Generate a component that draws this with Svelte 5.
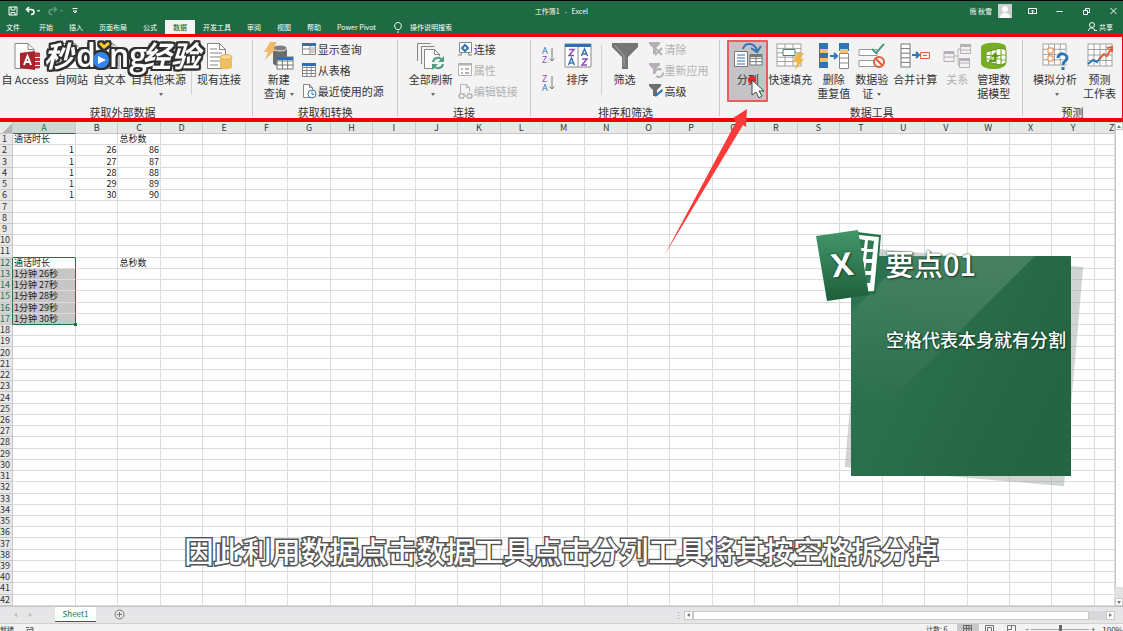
<script>
    const tabs = ['文件', '开始', '插入', '页面布局', '公式', '数据', '开发工具', '审阅', '视图', '帮助', 'Power Pivot'];
    let activeTab = $state('数据');

    const columns = 'ABCDEFGHIJKLMNOPQRSTUVWXYZ'.split('');
    const rows = Array.from({ length: 42 }, (_, i) => i + 1);

    const cells = {
        A1: '通话时长', C1: '总秒数',
        A12: '通话时长', C12: '总秒数',
    };
    for (let i = 0; i < 5; i++) {
        cells[`A${i + 2}`] = 1;
        cells[`B${i + 2}`] = 26 + i;
        cells[`C${i + 2}`] = 86 + i;
        cells[`A${i + 13}`] = `1分钟 ${26 + i}秒`;
    }

    const inSelection = (col, row) => col === 'A' && row >= 12 && row <= 17;

    // ribbon groups; flex is the share of the ribbon's width
    const groups = [
        { name: '获取外部数据', flex: 253, kind: 'external', items: [
            { icon: 'access', lines: ['自 Access'] },
            { icon: 'doc', lines: ['自网站'] },
            { icon: 'doc', lines: ['自文本'] },
            { icon: 'doc', lines: ['自其他来源'], menu: true },
            { sep: true },
            { icon: 'existing', lines: ['现有连接'] },
        ] },
        { name: '获取和转换', flex: 145, kind: 'query', items: [
            { icon: 'newquery', lines: ['新建', '查询'], menu: true },
            { stack: [
                { icon: 'showquery', label: '显示查询' },
                { icon: 'table', label: '从表格' },
                { icon: 'recent', label: '最近使用的源' },
            ] },
        ] },
        { name: '连接', flex: 133, kind: 'connect', items: [
            { icon: 'refresh', lines: ['全部刷新'], menu: true },
            { stack: [
                { icon: 'connection', label: '连接' },
                { icon: 'props', label: '属性', disabled: true },
                { icon: 'editlink', label: '编辑链接', disabled: true },
            ] },
        ] },
        { name: '排序和筛选', flex: 190, kind: 'sort', items: [
            { sorts: true },
            { icon: 'sort', lines: ['排序'] },
            { sep: true },
            { icon: 'filter', lines: ['筛选'] },
            { stack: [
                { icon: 'clear', label: '清除', disabled: true },
                { icon: 'reapply', label: '重新应用', disabled: true },
                { icon: 'advanced', label: '高级' },
            ] },
        ] },
        { name: '数据工具', flex: 303, kind: 'data', items: [
            { icon: 'split', lines: ['分列'], marked: true },
            { icon: 'flash', lines: ['快速填充'] },
            { icon: 'dedupe', lines: ['删除', '重复值'] },
            { icon: 'validate', lines: ['数据验', '证'], menu: true },
            { icon: 'consolidate', lines: ['合并计算'] },
            { icon: 'relation', lines: ['关系'], disabled: true },
            { icon: 'model', lines: ['管理数', '据模型'] },
        ] },
        { name: '预测', flex: 99, kind: 'forecast', items: [
            { icon: 'whatif', lines: ['模拟分析'], menu: true },
            { icon: 'forecast', lines: ['预测', '工作表'] },
        ] },
    ];
</script>

{#snippet gridLines(x, y, w, h, nx, ny, color)}
    <rect {x} {y} width={w} height={h} fill="#fff" stroke={color} />
    {#each Array(nx - 1) as _, i}
        <path d="M{x + ((i + 1) * w) / nx} {y}v{h}" stroke={color} />
    {/each}
    {#each Array(ny - 1) as _, i}
        <path d="M{x} {y + ((i + 1) * h) / ny}h{w}" stroke={color} />
    {/each}
{/snippet}

{#snippet bigIcon(name)}
    <svg class="big-icon" viewBox="0 0 30 28" fill="none" aria-hidden="true">
        {#if name === 'access'}
            <path d="M5 1.500h13l6 6v19H5z" fill="#fff" stroke="#8a8a8a" />
            <path d="M18 1.500v6h6" stroke="#8a8a8a" />
            <path d="M23 12c0-2 8-2 8 0v13c0 2-8 2-8 0z" fill="#b5373a" />
            <path d="M23 15.500h7M23 19.500h7M23 23.500h7" stroke="#fff" />
            <path d="M10 11l15-2v19l-15-2z" fill="#a4262c" />
            <path d="M14 23l3.500-9 3.500 9M15.500 20h4" stroke="#fff" stroke-width="2" />
        {:else if name === 'doc'}
            <path d="M5 1.500h13l6 6v19H5z" fill="#fff" stroke="#8a8a8a" />
            <path d="M18 1.500v6h6M8 11h12M8 15h12M8 19h12" stroke="#8a8a8a" />
        {:else if name === 'existing'}
            <path d="M3.500 1.500h12l6 6v19h-18z" fill="#fff" stroke="#858585" />
            <path d="M15.500 1.500v6h6M6 7h7M6 11h12M6 15h10M6 19h10M6 23h8" stroke="#858585" />
            <path d="M16 15v10c0 3 12 3 12 0V15z" fill="#eebf62" />
            <ellipse cx="22" cy="15" rx="6" ry="2.500" fill="#f7d795" stroke="#e2ac48" />
        {:else if name === 'newquery'}
            <path d="M9 5v16c0 4 14 4 14 0V5z" fill="#6b6b6b" />
            <ellipse cx="16" cy="6" rx="7" ry="3" fill="#7f7f7f" stroke="#eee" />
            <path d="M6 0h7L9 7h3L1 18l3-8H0z" fill="#efb96b" />
            {@render gridLines(13, 15, 16, 12, 3, 3, '#777')}
            <path d="M13 15h16v3H13z" fill="#2b70b5" />
        {:else if name === 'refresh'}
            <path d="M1.500 19V1.500h13M5.500 22V4.500h13" stroke="#858585" />
            <path d="M8.500 7.500h10l5 5v14h-15z" fill="#fff" stroke="#858585" />
            <path d="M18.500 7.500v5h5" stroke="#858585" />
            <circle cx="22" cy="21" r="7" fill="#f3f3f3" />
            <path d="M17 20a5 5 0 0 1 9-2M27 22a5 5 0 0 1-9 2" stroke="#4f9d7f" stroke-width="2" />
            <path d="M28 14v6h-6zM16 28v-6h6z" fill="#4f9d7f" />
        {:else if name === 'sort'}
            <path d="M2 2h26v23H2z" fill="#fff" stroke="#888" />
            <path d="M2 2h26v3H2z" fill="#2b70b5" />
            <path d="M15 5v20" stroke="#888" />
            <path d="M6 7.500h5l-5 6h5M19 17h5l-5 6h5" stroke="#8b52b5" stroke-width="1.500" />
            <path d="M5.500 23l3-7 3 7M6.500 21h4M18.500 14l3-7 3 7M19.500 12h4" stroke="#3a79b8" stroke-width="1.500" />
        {:else if name === 'filter'}
            <path d="M2 1h26v4L18 15v12h-6V15L2 5z" fill="#757575" />
            <path d="M5 3.500l9 10v11" stroke="#a6a6a6" />
        {:else if name === 'split'}
            <path d="M10 7c2-7 12-7 14 2" stroke="#2f75b5" stroke-width="2" />
            <path d="M18 6l6 4 4-6" stroke="#2f75b5" stroke-width="2" />
            <path d="M1.500 9.500h13v15h-13z" fill="#fff" stroke="#777" />
            <path d="M4 13h8M4 16h8M4 19h8M4 22h8" stroke="#2f75b5" />
            {@render gridLines(17, 13, 12, 10, 2, 3, '#777')}
            <path d="M17 12h12v3H17z" fill="#777" />
        {:else if name === 'flash'}
            {@render gridLines(2, 2, 24, 22, 3, 5, '#a0a0a0')}
            <path d="M8 7.500h12v6H8z" fill="#fff" stroke="#398b68" />
            <path d="M22 11h7l-4 6h4l-9 11 2-8h-4z" fill="#efb54d" />
        {:else if name === 'dedupe'}
            <path d="M0 1h9v25H0zM20 1h10v8H20z" fill="#2f75b5" />
            <path d="M1 7h8v4H1zM1 16h8v4H1zM21 7h8v4h-8z" fill="#f3c36c" />
            <path d="M20.500 11.500h9v15h-9zM20 16h10M20 21h10" fill="#fff" stroke="#888" />
            <path d="M11 14h6M15 11l3 3-3 3" stroke="#2f75b5" stroke-width="2" />
        {:else if name === 'validate'}
            <path d="M2 7.500h18v6H2zM2 18.500h18v6H2z" fill="#fff" stroke="#999" />
            <path d="M15 7l4 4 8-9" stroke="#4f9d7f" stroke-width="2" />
            <circle cx="22" cy="20" r="5" stroke="#db6038" stroke-width="2" fill="#f3f3f3" />
            <path d="M18.500 16.500l7 7" stroke="#db6038" stroke-width="2" />
        {:else if name === 'consolidate'}
            {@render gridLines(1, 2, 9, 23, 1, 5, '#777')}
            <path d="M12 13h6M16 10l3 3-3 3" stroke="#2f75b5" stroke-width="2" />
            <path d="M20.500 10.500h9v6h-9zM23 13.500h4" stroke="#db6038" />
        {:else if name === 'relation'}
            <path d="M12 14h4V7h3M16 14v9h3" stroke="#b5b0b5" />
            <path d="M2 9.500h10v10H2zM18.500 2.500h10v9h-10zM17.500 16.500h10v9h-10zM18 8h10M18 21h10M2 15h10" fill="#f3f1f3" stroke="#b5b0b5" />
            <path d="M2 9h10v3H2zM18 2h11v3H18zM17 16h11v3H17z" fill="#b5b0b5" />
        {:else if name === 'model'}
            <path d="M2 5c0-5 24-6 25 0v16c0 8-25 8-25 0z" fill="#78ad26" />
            <path d="M7 10l15-4v17L7 20zM22 6l5 2v13l-5 2" fill="#fff" stroke="#5f9518" />
            <path d="M12 9v12M17 7v15M7 13.500h15M7 17h15M22 13h5M22 18h5" stroke="#78ad26" />
            <path d="M10 19h6v-6M13 15l3-3 3 3" stroke="#5f9518" stroke-width="2" />
        {:else if name === 'whatif'}
            {@render gridLines(3, 2, 23, 21, 4, 4, '#a0a0a0')}
            <path d="M8 6h5v5H8zM8 14h5v5H8z" fill="#fff" stroke="#e2803f" />
            <path d="M18 16c0-6 9-5 9 0 0 3-4 3-4 7" stroke="#f3f3f3" stroke-width="5" />
            <path d="M18 16c0-6 9-5 9 0 0 3-4 3-4 7M23 25v3" stroke="#2f75b5" stroke-width="3" />
        {:else if name === 'forecast'}
            {@render gridLines(3, 2, 24, 22, 4, 4, '#a0a0a0')}
            <path d="M3 22l5-4 4 2 4-5" stroke="#2f75b5" stroke-width="2" />
            <path d="M14 17l5-5 3 2 4-7M22 6l5-1v5" stroke="#db6038" stroke-width="2" />
        {/if}
    </svg>
{/snippet}

{#snippet smallIcon(name)}
    <svg class="small-icon" viewBox="0 0 16 16" fill="none" aria-hidden="true">
        {#if name === 'showquery'}
            <path d="M1.500 2.500h13v11h-13zM1 8h8M9 5v9" fill="#fff" stroke="#888" />
            <path d="M1 2h14v3H1z" fill="#2b70b5" />
            <path d="M10 7h4M10 9h4M10 11h4" stroke="#999" />
        {:else if name === 'table'}
            {@render gridLines(1.5, 2.5, 13, 12, 3, 4, '#888')}
            <path d="M1 1h14v3H1z" fill="#2b70b5" />
        {:else if name === 'recent'}
            <path d="M2.500 1.500h6l3 3v10h-9zM8.500 1.500v3h3" fill="#fff" stroke="#888" />
            <circle cx="11" cy="11" r="4" fill="#fff" stroke="#2f75b5" />
            <path d="M11 8.500v3h2" stroke="#2f75b5" />
        {:else if name === 'connection'}
            <path d="M2.500 1.500h12v10h-12zM1 14h4M11 14h4M5 12l-2 2M11 12l2 2" fill="#fff" stroke="#888" />
            <path d="M8 4l3 3-3 3-3-3z" stroke="#2f75b5" stroke-width="2" />
        {:else if name === 'props'}
            <path d="M1.500 1.500h13v12h-13z" fill="#fff" stroke="#b5b0b5" />
            <path d="M1 2.500h14" stroke="#b5b0b5" stroke-width="2" />
            <path d="M4 7h2M8 7h4M4 11h2M8 11h4" stroke="#b5b0b5" stroke-width="2" />
        {:else if name === 'editlink'}
            <path d="M3.500 12V1.500h6l3 3V9M9.500 1.500v3h3" stroke="#b5b0b5" />
            <path d="M8 11H4a2 2 0 0 0 0 4h3M10 11h3a2 2 0 0 1 0 4h-3M6 13h5" stroke="#b5b0b5" stroke-width="1.500" />
        {:else if name === 'clear'}
            <path d="M1 1h11v2L8 7v6H5V7L1 3z" fill="#b5b0b5" />
            <path d="M7 7l7 7M14 7l-7 7" stroke="#b5b0b5" stroke-width="2" />
        {:else if name === 'reapply'}
            <path d="M1 1h11v2L8 7v5H5V7L1 3z" fill="#b5b0b5" />
            <circle cx="11" cy="11" r="4" stroke="#b5b0b5" fill="#f3f3f3" stroke-width="2" stroke-dasharray="9 3" />
        {:else if name === 'advanced'}
            <path d="M1 1h12v2L9 7v6H5V7L1 3z" fill="#6e6e6e" />
            <path d="M7 14l1-3 6-5 1 2-6 5z" fill="#2f75b5" />
        {/if}
    </svg>
{/snippet}

{#snippet sortIcon(top, bottom)}
    <svg class="sort-icon" viewBox="0 0 14 18" aria-hidden="true">
        <text x="1" y="8" fill={top === 'A' ? '#3a79b8' : '#8b52b5'}>{top}</text>
        <text x="1" y="17" fill={bottom === 'A' ? '#3a79b8' : '#8b52b5'}>{bottom}</text>
        <path d="M11 2v13M8.500 12.500L11 15l2.500-2.500" fill="none" stroke="#777" />
    </svg>
{/snippet}

<main>
    <header>
        <div class="titlebar">
            <div class="quick">
                <button aria-label="保存"><svg width="10" height="10" viewBox="0 0 10 10" fill="none" stroke="#fff"><path d="M1 1h8v8H1zM3 1v3h4V1M3 9V6.500h4V9" /></svg></button>
                <button aria-label="撤消"><svg width="16" height="10" viewBox="0 0 16 10" fill="none" stroke="#fff" stroke-width="1.500"><path d="M4 1L1.500 3.500 4 6M2 3.500h4c4 0 4 5 0 5" /><path d="M12 4.500h3l-1.500 1z" stroke-width=".5" fill="#fff" /></svg></button>
                <button class="faded" aria-label="恢复"><svg width="16" height="10" viewBox="0 0 16 10" fill="none" stroke="#fff" stroke-width="1.500"><path d="M6 1l2.500 2.500L6 6M8 3.500H4c-4 0-4 5 0 5" /><path d="M12 4.500h3l-1.500 1z" stroke-width=".5" fill="#fff" /></svg></button>
                <button aria-label="自定义"><svg width="8" height="8" viewBox="0 0 8 8" fill="none" stroke="#fff"><path d="M1.500 1.500h5M2 4h4L4 6z" /></svg></button>
            </div>
            <h1>工作簿1 &nbsp; - &nbsp; Excel</h1>
            <div class="account">
                <span>熊 秋雪</span>
                <svg class="avatar" viewBox="0 0 14 14"><path d="M0 0h14v14H0z" fill="#cfcfcf" /><circle cx="7" cy="5" r="3" fill="#fff" /><path d="M2 14c0-7 10-7 10 0z" fill="#fff" /></svg>
                <button aria-label="功能区显示选项"><svg width="9" height="8" viewBox="0 0 9 8" fill="none" stroke="#fff"><path d="M.5 1.500h8v5h-8zM4.500 6V3M3 4.500L4.500 3 6 4.500" /></svg></button>
                <button aria-label="最小化"><svg width="9" height="8" viewBox="0 0 9 8" stroke="#fff"><path d="M1.500 4.500h6" /></svg></button>
                <button aria-label="还原"><svg width="9" height="8" viewBox="0 0 9 8" fill="none" stroke="#fff"><path d="M1.500 3.500h4v4h-4zM3.500 3V1.500h4v4H6" /></svg></button>
                <button aria-label="关闭"><svg width="9" height="8" viewBox="0 0 9 8" stroke="#fff"><path d="M1.500 1l6 6M7.500 1l-6 6" /></svg></button>
            </div>
        </div>
        <nav>
            {#each tabs as tab}
                <button class="tab" class:active={tab === activeTab} onclick={() => (activeTab = tab)}>{tab}</button>
            {/each}
            <button class="tell">
                <svg width="8" height="11" viewBox="0 0 8 11" fill="none" stroke="#fff"><path d="M2.500 7.500C-1 4 1 .5 4 .5S9 4 5.500 7.500zM3 10h2" /></svg>
                操作说明搜索
            </button>
            <button class="share">
                <svg width="9" height="10" viewBox="0 0 9 10" fill="none" stroke="#fff"><circle cx="4" cy="3" r="2.500" /><path d="M.5 9c0-4 5-4 6-1M6 8.500h3" /></svg>
                共享
            </button>
        </nav>
    </header>

    <section class="ribbon">
        {#each groups as group}
            <div class="group {group.kind}" style="flex-grow: {group.flex}">
                <div class="tools">
                    {#each group.items as item}
                        {#if item.sep}
                            <span class="sep"></span>
                        {:else if item.sorts}
                            <div class="sorts">
                                <button aria-label="升序">{@render sortIcon('A', 'Z')}</button>
                                <button aria-label="降序">{@render sortIcon('Z', 'A')}</button>
                            </div>
                        {:else if item.stack}
                            <div class="stack">
                                {#each item.stack as small}
                                    <button class="small" disabled={small.disabled}>
                                        {@render smallIcon(small.icon)}
                                        {small.label}
                                    </button>
                                {/each}
                            </div>
                        {:else}
                            <button class="big" class:marked={item.marked} disabled={item.disabled}>
                                {@render bigIcon(item.icon)}
                                <span>{item.lines[0]}</span>
                                {#if item.lines[1] || item.menu}
                                    <span>{item.lines[1] ?? ''}{#if item.menu}<i class="caret"></i>{/if}</span>
                                {/if}
                            </button>
                        {/if}
                    {/each}
                </div>
                <h2>{group.name}</h2>
            </div>
        {/each}

        <svg class="watermark" viewBox="0 0 170 44" aria-label="秒dong经验">
            <g class="brand">
                <text class="hanzi" x="6" y="29">秒</text>
                <text class="latin" x="38" y="29">d</text>
                <circle cx="63" cy="22" r="8" fill="#3385f0" />
                <text class="latin" x="71" y="29">ng</text>
                <text class="hanzi" x="104" y="29">经验</text>
                <path d="M62 5l4 4 5-4" fill="none" stroke="#ffc629" stroke-width="3" />
            </g>
            <path d="M60 18l8 4-8 4z" fill="#fff" />
        </svg>

        <svg class="cursor" viewBox="0 0 16 22" aria-hidden="true">
            <circle cx="4" cy="4" r="4" fill="#e3262b" />
            <path d="M4 4v15l4-3 3 6 3-2-3-5h5z" fill="#fff" stroke="#444" />
        </svg>

        <svg class="pointer" viewBox="0 0 84 148" aria-hidden="true">
            <path d="M83 0L69 9l3 4L0 147l79-131 3 2z" fill="#fd3a3a" />
        </svg>
    </section>

    <section class="sheet">
        <div class="grid">
            <table>
                <colgroup>
                    <col class="col-num" />
                    <col class="col-a" />
                    {#each columns.slice(1, -1) as _}<col />{/each}
                    <col class="col-z" />
                </colgroup>
                <thead>
                    <tr>
                        <th class="corner"></th>
                        {#each columns as col}
                            <th class:picked={col === 'A'} class:cut={col === 'Z'}>{col}</th>
                        {/each}
                    </tr>
                </thead>
                <tbody>
                    {#each rows as row}
                        <tr>
                            <th class:picked={inSelection('A', row)}>{row}</th>
                            {#each columns as col}
                                {@const value = cells[col + row]}
                                <td
                                    class:number={typeof value === 'number'}
                                    class:above={col === 'A' && row === 11}
                                    class:selected={inSelection(col, row)}
                                    class:first={col === 'A' && row === 12}
                                    class:last={col === 'A' && row === 17}>{value ?? ''}</td>
                            {/each}
                        </tr>
                    {/each}
                </tbody>
            </table>
        </div>

        <div class="vscroll">
            <button aria-label="向上滚动"><i class="up"></i></button>
            <div class="track"><div class="thumb"></div></div>
            <button aria-label="向下滚动"><i class="down"></i></button>
        </div>

        <aside class="note">
            <div class="shadow"></div>
            <svg class="paper" viewBox="0 0 220 220" preserveAspectRatio="none" aria-hidden="true">
                <defs>
                    <linearGradient id="base" x1="0" y1="0" x2="1" y2="0.5">
                        <stop offset="0" stop-color="#2f7550" />
                        <stop offset="1" stop-color="#246543" />
                    </linearGradient>
                    <linearGradient id="shine" x1="0.7" y1="0" x2="0.3" y2="0.9">
                        <stop offset="0" stop-color="#fff" stop-opacity="0.14" />
                        <stop offset="1" stop-color="#fff" stop-opacity="0" />
                    </linearGradient>
                </defs>
                <path d="M0 0h220v220H0z" fill="url(#base)" />
                <path d="M56 0h128L0 184V56z" fill="url(#shine)" />
            </svg>
            <svg class="logo" viewBox="0 0 68 74" aria-hidden="true">
                <defs>
                    <linearGradient id="cover" x1="0" y1="0" x2="0" y2="1">
                        <stop offset="0" stop-color="#43966b" />
                        <stop offset="1" stop-color="#1d5f3a" />
                    </linearGradient>
                </defs>
                <path d="M42 4l24 3-5 59-20 3z" fill="#227447" />
                <path d="M44 7l20 2-5 54-14 1z" fill="#fff" />
                <path d="M44 11l6 1-1 8h-5zM53 12l6 1-1 8h-6zM44 23h5l-1 8h-4zM52 24h6l-1 7h-6zM45 35h4l-1 8h-3zM51 35h6l-1 8h-6zM46 47h3l-1 8h-2zM51 47h5l-1 8h-5z" fill="#2f7a52" />
                <path d="M1 8l42-6 11 65-42 6z" fill="url(#cover)" />
                <text x="27" y="48" text-anchor="middle" transform="rotate(-8 27 37)">X</text>
            </svg>
            <h3>要点01</h3>
            <p>空格代表本身就有分割</p>
        </aside>

        <p class="caption">因此利用数据点击数据工具点击分列工具将其按空格拆分掉</p>
    </section>

    <section class="sheetbar">
        <div class="arrows">
            <button aria-label="上一张"><i class="left"></i></button>
            <button aria-label="下一张"><i class="right"></i></button>
        </div>
        <button class="sheet-tab">Sheet1</button>
        <button class="add" aria-label="新工作表"><svg width="11" height="11" viewBox="0 0 11 11" fill="none" stroke="#777"><circle cx="5.500" cy="5.500" r="4.500" /><path d="M3 5.500h5M5.500 3v5" /></svg></button>
        <div class="hscroll">
            <span class="grip">⋮</span>
            <button aria-label="向左滚动"><i class="left"></i></button>
            <div class="track"><div class="thumb"></div></div>
            <button aria-label="向右滚动"><i class="right"></i></button>
        </div>
    </section>

    <footer>
        <span>就绪</span>
        <svg width="9" height="8" viewBox="0 0 9 8" fill="none" stroke="#666"><path d="M1 1.500h3M5 1.500h3v5H2v-3h6" /></svg>
        <span class="count">计数: 6</span>
        <button class="view on" aria-label="普通"><svg width="9" height="8" viewBox="0 0 9 8" fill="none" stroke="#666"><path d="M.5 .5h8v7h-8zM.5 3.500h8M3.500 .5v7M6 .5v7" /></svg></button>
        <button class="view" aria-label="页面布局"><svg width="9" height="8" viewBox="0 0 9 8" fill="none" stroke="#777"><path d="M.5 .5h8v7h-8zM2.500 2.500h4v4h-4z" /></svg></button>
        <button class="view" aria-label="分页预览"><svg width="9" height="8" viewBox="0 0 9 8" fill="none" stroke="#777"><path d="M.5 .5h8v7h-8zM4.500 .5v4h-4" /></svg></button>
        <span class="zoom-sign">−</span>
        <input type="range" min="10" max="190" value="100" aria-label="缩放" />
        <span class="zoom-sign">+</span>
        <span class="percent">100%</span>
    </footer>
</main>

<style>
    :global(body) {
        margin: 0;
        overflow: hidden;
    }
    main {
        --green: #1d6a43;
        height: 100vh;
        display: flex;
        flex-direction: column;
        overflow: hidden;
        background: #fff;
        color: #333;
        font-family: "Noto Sans CJK SC", "Noto Sans", sans-serif;
        font-size: 11px;
    }
    button {
        margin: 0;
        padding: 0;
        border: 0;
        background: none;
        color: inherit;
        font: inherit;
    }
    h1, h2, h3, p {
        margin: 0;
        font-weight: 400;
    }
    svg {
        display: block;
        flex: none;
    }

    /* title bar and tabs */
    header {
        flex: none;
        border-top: 1px solid #000;
        background: var(--green);
        color: #fff;
        font-size: 7px;
    }
    .titlebar {
        height: 19px;
        display: grid;
        grid-template-columns: 1fr auto 1fr;
        align-items: center;
    }
    .quick, .account {
        display: flex;
        align-items: center;
    }
    .quick {
        padding-left: 8px;
        gap: 7px;
    }
    .faded {
        opacity: .3;
    }
    h1 {
        font-size: 7px;
    }
    .account {
        justify-content: flex-end;
        gap: 18px;
        padding-right: 5px;
    }
    .account .avatar {
        width: 14px;
        height: 14px;
        margin-left: -12px;
        margin-right: -2px;
    }
    nav {
        height: 14px;
        display: flex;
        align-items: stretch;
        line-height: 14px;
    }
    .tab {
        padding: 0 8px;
    }
    .tab:first-child {
        padding: 0 11px 0 6px;
    }
    .tab.active {
        background: #f3f3f3;
        color: var(--green);
        font-weight: 500;
    }
    .tell, .share {
        display: flex;
        align-items: center;
        gap: 8px;
        padding: 0 10px;
    }
    .share {
        margin-left: auto;
        gap: 2px;
    }

    /* ribbon */
    .ribbon {
        flex: none;
        height: 81px;
        display: flex;
        position: relative;
        z-index: 1;
        border: 0 solid #f00000;
        border-width: 3px 1px 4px 0;
        background: #f3f3f3;
    }
    .group {
        flex: 1 1 0;
        min-width: 0;
        display: flex;
        flex-direction: column;
        box-sizing: border-box;
        padding-top: 5px;
        background: linear-gradient(#c9c9c9, #c9c9c9) right center / 1px 76px no-repeat;
    }
    .group:last-of-type {
        background: none;
    }
    .tools {
        display: flex;
        align-items: flex-start;
        white-space: nowrap;
    }
    h2 {
        margin-top: auto;
        font-size: 11px;
        line-height: 12px;
        text-align: center;
    }
    .external h2 {
        padding-right: 8px;
    }
    .external .tools {
        gap: 5px;
    }
    .external .big:first-child {
        width: 50px;
    }
    .query .tools {
        padding-left: 11px;
        gap: 7px;
    }
    .connect .tools {
        padding-left: 11px;
        gap: 4px;
    }
    .sort .tools {
        padding-left: 10px;
        gap: 8px;
    }
    .data .tools {
        padding-left: 7px;
        gap: 5px;
    }
    .forecast .tools {
        padding-left: 10px;
        gap: 6px;
    }
    .big {
        display: flex;
        flex-direction: column;
        align-items: center;
        line-height: 14px;
    }
    .big span {
        height: 14px;
    }
    .big-icon {
        width: 30px;
        height: 28px;
        margin-bottom: 2px;
    }
    .marked {
        margin: -2px -5px 0 0;
        width: 41px;
        height: 62px;
        box-sizing: border-box;
        border: 2px solid #ef5a5f;
        background: #c4c4c6;
        border-radius: 1px;
    }
    button:disabled {
        color: #b1b1b1;
    }
    .caret {
        display: inline-block;
        margin: 0 0 2px 4px;
        border: 2px solid transparent;
        border-top: 3px solid #666;
        border-bottom: 0;
    }
    .sep {
        width: 1px;
        height: 50px;
        margin-top: 3px;
        background: #d0d0d0;
    }
    .stack {
        display: flex;
        flex-direction: column;
    }
    .small {
        height: 21px;
        display: flex;
        align-items: center;
        gap: 1px;
        line-height: 14px;
        padding-bottom: 7px;
    }
    .small-icon {
        width: 16px;
        height: 16px;
    }
    .sorts {
        display: flex;
        flex-direction: column;
        gap: 10px;
        padding-top: 4px;
    }
    .sort-icon {
        width: 14px;
        height: 18px;
        overflow: visible;
        font: 9px "Noto Sans", sans-serif;
    }

    .watermark {
        position: absolute;
        left: 38px;
        top: 1px;
        width: 170px;
        height: 44px;
        overflow: visible;
    }
    .brand {
        fill: #fff;
        filter: drop-shadow(2px 0 0 #303030) drop-shadow(-2px 0 0 #303030) drop-shadow(0 2px 0 #303030) drop-shadow(0 -2px 0 #303030);
    }
    .hanzi {
        font: italic 700 29px "Noto Sans CJK SC", sans-serif;
    }
    .latin {
        font: 600 32px "Open Sans", sans-serif;
    }
    .cursor {
        position: absolute;
        left: 748px;
        top: 39px;
        width: 16px;
        height: 22px;
    }
    .pointer {
        position: absolute;
        left: 664px;
        top: 72px;
        width: 84px;
        height: 148px;
    }

    /* grid */
    .sheet {
        flex: 1;
        min-height: 0;
        display: flex;
        position: relative;
    }
    .grid {
        flex: 1;
        min-width: 0;
        overflow: hidden;
    }
    table {
        width: 100%;
        height: 100%;
        table-layout: fixed;
        border-spacing: 0;
        font-size: 9px;
        line-height: 10px;
    }
    .col-num {
        width: 13px;
    }
    .col-a {
        width: 63px;
    }
    .col-z {
        width: 20px;
    }
    th, td {
        padding: 0;
        border: 0 solid #dcdcdc;
        border-width: 0 1px 1px 0;
        white-space: nowrap;
    }
    th {
        background: #e8e8e8;
        border-color: #c8c8c8;
        font-weight: 400;
        text-align: center;
    }
    thead th {
        height: 11px;
    }
    thead .cut {
        padding-left: 14px;
        overflow: hidden;
        text-align: left;
    }
    tbody th {
        padding-right: 3px;
    }
    .corner {
        background: linear-gradient(135deg, #e8e8e8 60%, #b5b5b5 60%);
    }
    th.picked {
        background: #d4d4d4;
        color: #217346;
    }
    thead th.picked {
        border-bottom-color: #217346;
    }
    tbody th.picked {
        border-right-color: #217346;
    }
    td {
        padding: 0 1px;
        color: #222;
    }
    td.number {
        text-align: right;
    }
    td.above {
        border-bottom-color: #217346;
    }
    td.selected {
        position: relative;
        border-right-color: #217346;
        background: #c6c6c6;
    }
    td.first {
        background: #fff;
    }
    td.last {
        border-bottom-color: #217346;
    }
    td.last::after {
        content: "";
        position: absolute;
        right: -2px;
        bottom: -2px;
        width: 3px;
        height: 3px;
        background: #217346;
    }

    /* scroll bars */
    i.up, i.down, i.left, i.right {
        display: block;
        width: 0;
        height: 0;
        margin: auto;
        border: 2px solid transparent;
    }
    i.up {
        border-top: 0;
        border-bottom: 3px solid #777;
    }
    i.down {
        border-bottom: 0;
        border-top: 3px solid #777;
    }
    i.left {
        border-left: 0;
        border-right: 3px solid #777;
    }
    i.right {
        border-right: 0;
        border-left: 3px solid #777;
    }
    .vscroll {
        flex: 0 0 8px;
        display: flex;
        flex-direction: column;
        background: #e2e2e2;
    }
    .vscroll button {
        height: 8px;
        background: #fff;
        border: 1px solid #c8c8c8;
    }
    .vscroll .track {
        flex: 1;
        padding-bottom: 11px;
        display: flex;
    }
    .vscroll .thumb {
        flex: 1;
        background: #fff;
        border-left: 1px solid #c8c8c8;
    }
    .sheetbar {
        flex: none;
        height: 17px;
        display: flex;
        align-items: flex-start;
        box-sizing: border-box;
        border-top: 1px solid #c4c4c4;
        background: #e6e6e8;
    }
    .arrows {
        width: 55px;
        height: 15px;
        display: flex;
        align-items: center;
        justify-content: center;
        gap: 12px;
        opacity: .4;
        box-sizing: border-box;
        padding-right: 10px;
    }
    .sheet-tab {
        width: 41px;
        height: 15px;
        box-sizing: border-box;
        border-bottom: 1px solid #217346;
        background: #fff;
        color: #217346;
        font-size: 8px;
        line-height: 14px;
    }
    .add {
        margin: 2px 0 0 18px;
    }
    .hscroll {
        width: 441px;
        height: 16px;
        margin-left: auto;
        padding-right: 8px;
        display: flex;
        align-items: center;
    }
    .grip {
        width: 10px;
        color: #999;
        font-size: 9px;
    }
    .hscroll button {
        width: 9px;
        height: 9px;
        box-sizing: border-box;
        background: #fff;
        border: 1px solid #c8c8c8;
    }
    .hscroll .track {
        flex: 1;
        height: 9px;
        padding-right: 17px;
        background: #d8d8da;
    }
    .hscroll .thumb {
        height: 9px;
        box-sizing: border-box;
        border: 1px solid #c8c8c8;
        background: #fff;
    }

    /* status bar, cut by the window's lower edge */
    footer {
        flex: 0 0 8px;
        display: flex;
        align-items: flex-start;
        overflow: hidden;
        box-sizing: border-box;
        border-top: 1px solid #d0d0d0;
        background: #f3f3f3;
        font-size: 7px;
        line-height: 11px;
        white-space: nowrap;
    }
    footer > svg {
        margin: 2px 0 0 11px;
    }
    .count {
        margin-left: auto;
        margin-right: 10px;
    }
    .view {
        width: 22px;
        height: 10px;
        padding: 1px 6px;
    }
    .view.on {
        background: #c8c8c8;
    }
    .zoom-sign {
        width: 8px;
        text-align: center;
    }
    footer input {
        appearance: none;
        width: 58px;
        height: 10px;
        margin: 0;
        background: linear-gradient(#aaa, #aaa) center / 100% 1px no-repeat;
    }
    footer input::-webkit-slider-thumb {
        appearance: none;
        width: 3px;
        height: 8px;
        background: #666;
    }
    .percent {
        margin-left: 5px;
        font-size: 8px;
    }

    /* video overlays */
    .note {
        position: absolute;
        right: 52px;
        top: 134px;
        width: 220px;
        height: 220px;
        color: #fff;
        text-shadow: 1px 1px 2px #103d25, 0 0 2px #103d25;
    }
    .shadow, .paper {
        position: absolute;
        inset: 0;
    }
    .shadow {
        background: rgba(150, 160, 155, .45);
        transform: translate(3px, 1px) rotate(5deg);
    }
    .paper {
        width: 100%;
        height: 100%;
    }
    .logo {
        position: absolute;
        left: -36px;
        top: -28px;
        width: 68px;
        height: 74px;
    }
    .logo text {
        fill: #fff;
        font: 700 32px "Open Sans", sans-serif;
    }
    .note h3 {
        position: absolute;
        left: 34px;
        top: -13px;
        font-size: 29px;
        font-weight: 500;
        line-height: 40px;
        white-space: nowrap;
    }
    .note p {
        position: absolute;
        left: 35px;
        top: 70px;
        font-size: 18px;
        font-weight: 500;
        line-height: 26px;
        white-space: nowrap;
    }
    .caption {
        position: absolute;
        left: 0;
        right: 0;
        bottom: 36px;
        color: #fff;
        font-size: 29px;
        font-weight: 500;
        line-height: 40px;
        text-align: center;
        white-space: nowrap;
        -webkit-text-stroke: 3px #555;
        paint-order: stroke fill;
    }
</style>
